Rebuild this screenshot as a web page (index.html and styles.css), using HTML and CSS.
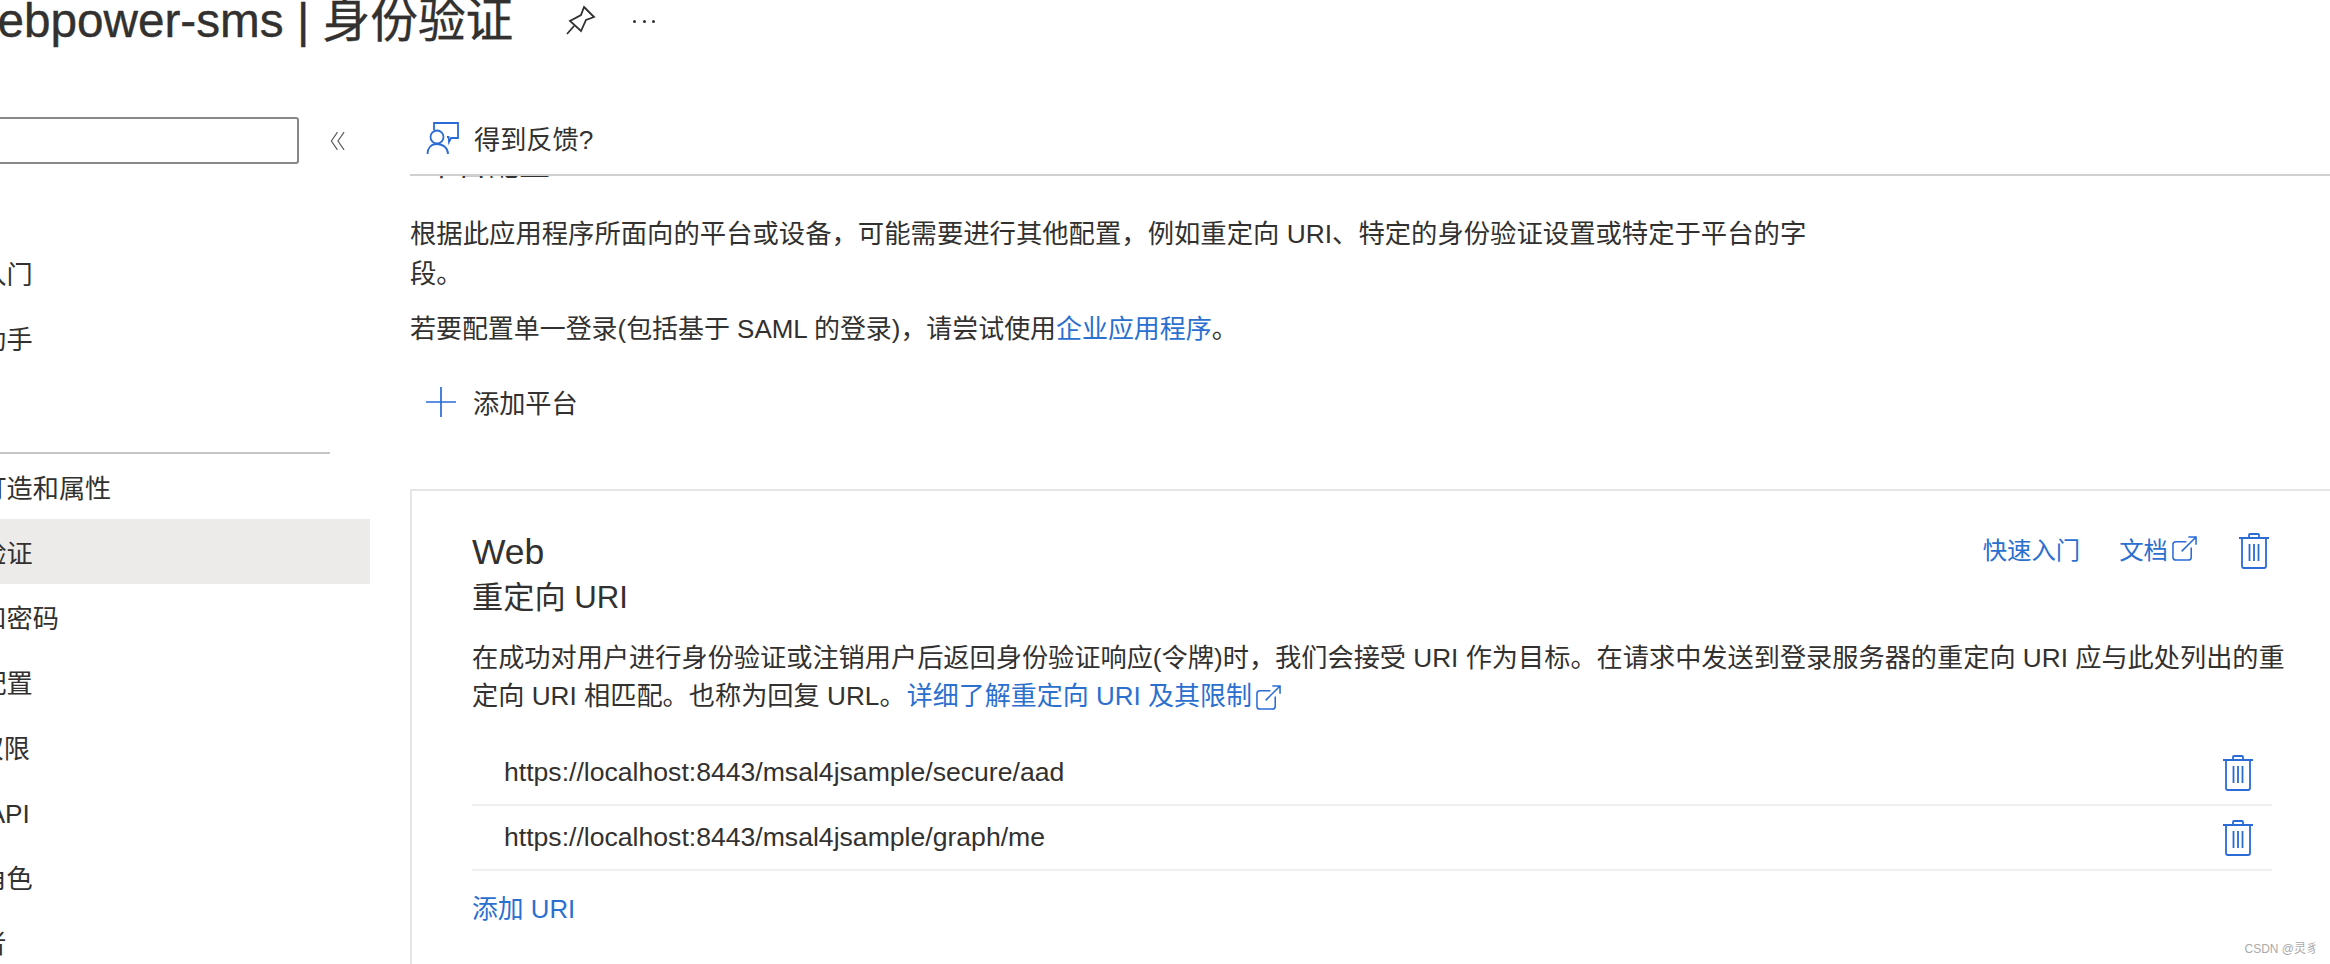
FILE: index.html
```html
<!DOCTYPE html>
<html lang="zh-CN">
<head>
<meta charset="utf-8">
<title>webpower-sms | 身份验证</title>
<link rel="stylesheet" href="styles.css">
</head>
<body>
<div class="page">
  <header class="title-bar">
    <h1 class="title">webpower-sms | 身份验证</h1>
    <svg class="pin" viewBox="0 0 30 32" fill="none" stroke="#323130" stroke-width="1.8"><path d="M18 2 L28 12 L20 15 L15 26 L4 16 L15 10 Z M1 29 L8 21"/></svg>
    <span class="dots"><i></i><i></i><i></i></span>
  </header>
  <div class="columns">
    <aside class="sidebar">
      <div class="search-row">
        <div class="search"></div>
        <svg class="collapse" viewBox="0 0 16 20" fill="none" stroke="#605e5c" stroke-width="1.1"><path d="M7.5 2 L2 10 L7.5 18 M13.5 2 L8 10 L13.5 18"/></svg>
      </div>
      <nav class="nav">
        <a class="nav-item first">快速入门</a>
        <a class="nav-item">集成助手</a>
        <div class="nav-rule"></div>
        <a class="nav-item">品牌打造和属性</a>
        <a class="nav-item active">身份验证</a>
        <a class="nav-item">证书和密码</a>
        <a class="nav-item">令牌配置</a>
        <a class="nav-item">API 权限</a>
        <a class="nav-item">公开 API</a>
        <a class="nav-item">应用角色</a>
        <a class="nav-item">所有者</a>
      </nav>
    </aside>
    <main class="main">
      <div class="toolbar">
        <svg class="feedback-icon" viewBox="0 0 33 32" fill="none" stroke="#2a6bd6" stroke-width="1.8"><path d="M8 8 V1 H32 V16 H25 L23 20 L22.5 15 H21"/><circle cx="11" cy="15" r="6.5"/><path d="M1.5 32 C1.5 26 5 22 11 22 C17 22 22 26 22 32"/></svg>
        <span>得到反馈?</span>
      </div>
      <div class="scroller">
        <h2 class="clipped-heading">平台配置</h2>
        <p class="lead">根据此应用程序所面向的平台或设备，可能需要进行其他配置，例如重定向 URI、特定的身份验证设置或特定于平台的字段。</p>
        <p class="lead second">若要配置单一登录(包括基于 SAML 的登录)，请尝试使用<a class="link">企业应用程序</a>。</p>
        <div class="add-platform">
          <svg class="plus" viewBox="0 0 30 30" stroke="#2a6bd6" stroke-width="1.7"><path d="M15 0 V30 M0 15 H30"/></svg>
          <span>添加平台</span>
        </div>
        <section class="card">
          <div class="card-actions">
            <a class="link action">快速入门</a>
            <a class="link action doc">文档<svg class="ext" viewBox="0 0 26 26" fill="none" stroke="#2a6bd6" stroke-width="1.6"><path d="M15 6 H4 Q1 6 1 9 V22 Q1 25 4 25 H17 Q20 25 20 22 V12 M10 16 L25 1 M17 1 H25 V9"/></svg></a>
            <svg class="trash" viewBox="0 0 30 36" fill="none" stroke="#2a6bd6" stroke-width="1.8"><path d="M0 5 H30 M3 5 V33 Q3 35 5 35 H25 Q27 35 27 33 V5 M10 5 V2 Q10 1 11 1 H19 Q20 1 20 2 V5 M10.5 11 V28 M15 11 V28 M19.5 11 V28"/></svg>
          </div>
          <h3 class="card-title">Web</h3>
          <h4 class="card-sub">重定向 URI</h4>
          <p class="desc">在成功对用户进行身份验证或注销用户后返回身份验证响应(令牌)时，我们会接受 URI 作为目标。在请求中发送到登录服务器的重定向 URI 应与此处列出的重定向 URI 相匹配。也称为回复 URL。 <a class="link learn">详细了解重定向 URI 及其限制<svg class="ext" viewBox="0 0 26 26" fill="none" stroke="#2a6bd6" stroke-width="1.6"><path d="M15 6 H4 Q1 6 1 9 V22 Q1 25 4 25 H17 Q20 25 20 22 V12 M10 16 L25 1 M17 1 H25 V9"/></svg></a></p>
          <ul class="uris">
            <li class="uri"><span>https://localhost:8443/msal4jsample/secure/aad</span><svg class="trash" viewBox="0 0 30 36" fill="none" stroke="#2a6bd6" stroke-width="1.8"><path d="M0 5 H30 M3 5 V33 Q3 35 5 35 H25 Q27 35 27 33 V5 M10 5 V2 Q10 1 11 1 H19 Q20 1 20 2 V5 M10.5 11 V28 M15 11 V28 M19.5 11 V28"/></svg></li>
            <li class="uri"><span>https://localhost:8443/msal4jsample/graph/me</span><svg class="trash" viewBox="0 0 30 36" fill="none" stroke="#2a6bd6" stroke-width="1.8"><path d="M0 5 H30 M3 5 V33 Q3 35 5 35 H25 Q27 35 27 33 V5 M10 5 V2 Q10 1 11 1 H19 Q20 1 20 2 V5 M10.5 11 V28 M15 11 V28 M19.5 11 V28"/></svg></li>
          </ul>
          <a class="link add-uri">添加 URI</a>
        </section>
      </div>
    </main>
  </div>
</div>
<div class="watermark">CSDN @灵豸</div>
</body>
</html>
```
FILE: styles.css
```css
* { box-sizing: border-box; }
html, body { margin: 0; height: 964px; overflow: hidden; background: #fff; }
body {
  font-family: "Liberation Sans", "Noto Sans CJK SC", sans-serif;
  font-size: 26.2px;
  color: #323130;
}
.page { width: 2410px; margin-left: -80px; }
.title-bar {
  display: flex;
  align-items: center;
  height: 42px;
  padding-left: 43px;
}
.title {
  margin: 0;
  font-size: 47.7px;
  font-weight: 400;
  line-height: 42px;
  white-space: nowrap;
  -webkit-text-stroke: 0.4px #323130;
}
.pin { width: 30px; height: 32px; margin-left: 53px; }
.dots { display: flex; gap: 6.5px; margin-left: 37px; }
.dots i { width: 3px; height: 3px; border-radius: 50%; background: #323130; }
.columns { display: grid; grid-template-columns: 450px 1fr; height: 922px; }
.sidebar { overflow: hidden; }
.search-row { display: flex; align-items: center; padding-top: 75px; }
.search {
  width: 379px;
  height: 47px;
  border: 2px solid #8a8886;
  border-radius: 3px;
}
.collapse { width: 18px; height: 22px; margin-left: 30px; }
.nav { margin-top: 26px; padding-top: 50px; }
.nav-item {
  display: flex;
  align-items: center;
  height: 65px;
  padding-left: 8px;
  white-space: nowrap;
}
.nav-rule { width: 410px; height: 2px; background: #c8c6c4; margin: 82px 0 0; }
.active { background: #edebe9; }
.main { padding-left: 40px; min-width: 0; }
.toolbar {
  display: flex;
  align-items: center;
  height: 132px;
  padding: 60px 0 0 16px;
  gap: 15px;
}
.feedback-icon { width: 33px; height: 32px; }
.scroller { border-top: 2px solid #d2d0ce; overflow: hidden; height: 790px; }
.clipped-heading {
  margin: -28px 0 0;
  height: 33px;
  font-size: 31px;
  font-weight: 400;
  line-height: 33px;
  padding-left: 16px;
}
.lead { margin: 0; width: 1412px; line-height: 40px; font-size: 26.35px; }
.clipped-heading + .lead { margin-top: 33px; }
.second { margin-top: 15px; font-size: 25.95px; }
.link { color: #2b70cf; }
.add-platform {
  display: flex;
  align-items: center;
  gap: 17px;
  padding-left: 16px;
  margin-top: 34px;
}
.plus { width: 30px; height: 30px; }
.card {
  position: relative;
  margin-top: 68px;
  height: 620px;
  border: solid #e5e5e5;
  border-width: 2px 0 0 2px;
  padding: 40px 58px 0 60px;
}
.card-actions {
  position: absolute;
  right: 61px;
  top: 40px;
  display: flex;
  align-items: center;
  font-size: 24.4px;
}
.action { padding-bottom: 5px; }
.card-actions .doc { margin-left: 39px; display: flex; align-items: center; }
.card-actions .trash { margin-left: 42px; }
.ext { width: 25px; height: 25px; margin-left: 4px; vertical-align: -5px; }
.trash { width: 30px; height: 36px; flex: none; }
.card-title { margin: 0; font-size: 35.5px; font-weight: 400; line-height: 42px; }
.card-sub { margin: 4px 0 0; font-size: 31.2px; font-weight: 400; line-height: 42px; }
.desc { margin: 20px -16px 0 0; line-height: 38px; }
.learn { margin-left: -6px; font-size: 26px; }
.uris { list-style: none; margin: 26px 0 0; padding: 0; }
.uri {
  display: flex;
  align-items: center;
  justify-content: space-between;
  height: 65px;
  padding: 0 19px 0 32px;
  border-bottom: 2px solid #f0f0f0;
  font-size: 26.6px;
}
.add-uri { display: block; margin-top: 17px; font-size: 25.8px; }
.watermark {
  position: absolute;
  right: 12px;
  bottom: 8px;
  font-size: 12px;
  color: #aaa;
}
```
